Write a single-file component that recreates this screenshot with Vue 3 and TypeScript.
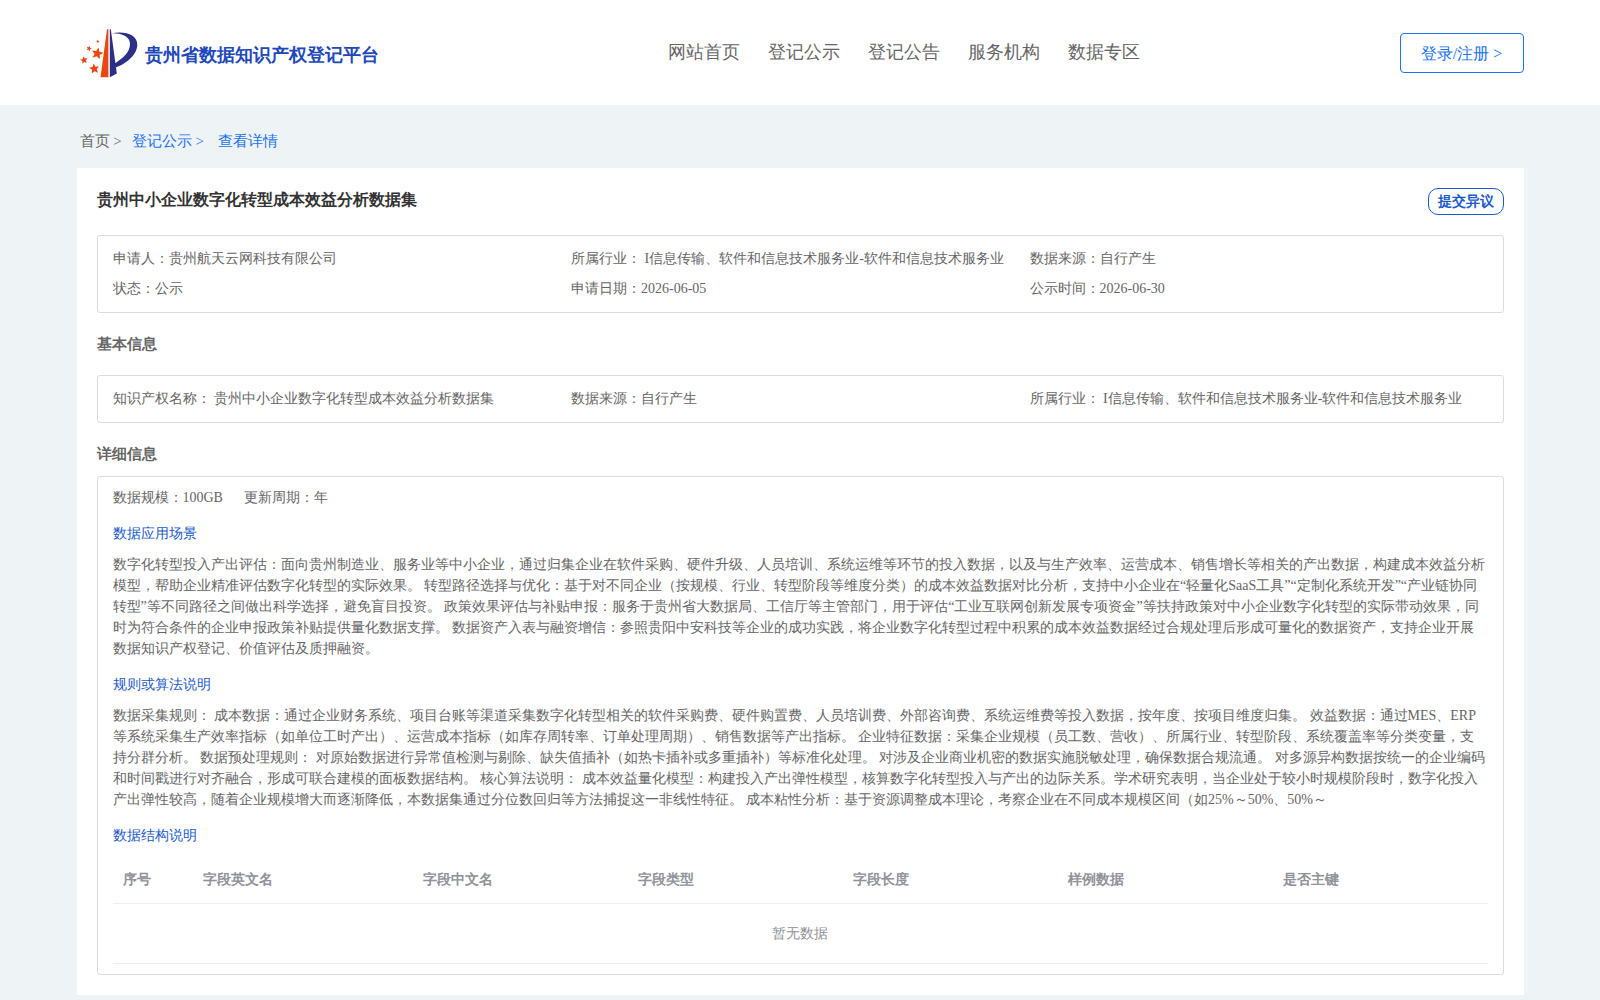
<script setup lang="ts">
interface Field {
  label: string
  value: string
}

interface Star {
  x: number
  y: number
  r: number
  tilt: number
}

const stars: Star[] = [
  { x: 17.3, y: 26.5, r: 6.2, tilt: 12 },
  { x: 14.3, y: 41.8, r: 5.4, tilt: -8 },
  { x: 4, y: 33.2, r: 4, tilt: -10 },
  { x: 9, y: 21.5, r: 2.8, tilt: 20 },
  { x: 17.7, y: 14.5, r: 1.8, tilt: 10 },
]

const navItems: string[] = ['网站首页', '登记公示', '登记公告', '服务机构', '数据专区']

const summary: Field[] = [
  { label: '申请人：', value: '贵州航天云网科技有限公司' },
  { label: '所属行业：', value: ' I信息传输、软件和信息技术服务业-软件和信息技术服务业' },
  { label: '数据来源：', value: '自行产生' },
  { label: '状态：', value: '公示' },
  { label: '申请日期：', value: '2026-06-05' },
  { label: '公示时间：', value: '2026-06-30' },
]

const basics: Field[] = [
  { label: '知识产权名称：', value: ' 贵州中小企业数字化转型成本效益分析数据集' },
  { label: '数据来源：', value: '自行产生' },
  { label: '所属行业：', value: ' I信息传输、软件和信息技术服务业-软件和信息技术服务业' },
]

const scenario =
  '数字化转型投入产出评估：面向贵州制造业、服务业等中小企业，通过归集企业在软件采购、硬件升级、人员培训、系统运维等环节的投入数据，以及与生产效率、运营成本、销售增长等相关的产出数据，构建成本效益分析模型，帮助企业精准评估数字化转型的实际效果。 转型路径选择与优化：基于对不同企业（按规模、行业、转型阶段等维度分类）的成本效益数据对比分析，支持中小企业在“轻量化SaaS工具”“定制化系统开发”“产业链协同转型”等不同路径之间做出科学选择，避免盲目投资。 政策效果评估与补贴申报：服务于贵州省大数据局、工信厅等主管部门，用于评估“工业互联网创新发展专项资金”等扶持政策对中小企业数字化转型的实际带动效果，同时为符合条件的企业申报政策补贴提供量化数据支撑。 数据资产入表与融资增信：参照贵阳中安科技等企业的成功实践，将企业数字化转型过程中积累的成本效益数据经过合规处理后形成可量化的数据资产，支持企业开展数据知识产权登记、价值评估及质押融资。'

const rules =
  '数据采集规则： 成本数据：通过企业财务系统、项目台账等渠道采集数字化转型相关的软件采购费、硬件购置费、人员培训费、外部咨询费、系统运维费等投入数据，按年度、按项目维度归集。 效益数据：通过MES、ERP等系统采集生产效率指标（如单位工时产出）、运营成本指标（如库存周转率、订单处理周期）、销售数据等产出指标。 企业特征数据：采集企业规模（员工数、营收）、所属行业、转型阶段、系统覆盖率等分类变量，支持分群分析。 数据预处理规则： 对原始数据进行异常值检测与剔除、缺失值插补（如热卡插补或多重插补）等标准化处理。 对涉及企业商业机密的数据实施脱敏处理，确保数据合规流通。 对多源异构数据按统一的企业编码和时间戳进行对齐融合，形成可联合建模的面板数据结构。 核心算法说明： 成本效益量化模型：构建投入产出弹性模型，核算数字化转型投入与产出的边际关系。学术研究表明，当企业处于较小时规模阶段时，数字化投入产出弹性较高，随着企业规模增大而逐渐降低，本数据集通过分位数回归等方法捕捉这一非线性特征。 成本粘性分析：基于资源调整成本理论，考察企业在不同成本规模区间（如25%～50%、50%～'

const columns: string[] = ['序号', '字段英文名', '字段中文名', '字段类型', '字段长度', '样例数据', '是否主键']
</script>

<template>
  <div class="page">
    <header class="header">
      <div class="brand">
        <svg class="logo" width="60" height="52" viewBox="0 0 60 52" aria-hidden="true">
          <path d="M27 2.3 L28.4 2.3 L28.4 50.2 L20.5 50.2 Z" fill="#e8470f" />
          <path d="M29.8 2.3 L30.8 2.3 L36.8 46.5 L29.8 50.2 Z" fill="#2a3088" />
          <path
            d="M31.7 6.3 C44 3.5 57.6 7 57.3 18 C57 28.5 45 37.500 35.500 40.500 L34.800 36.500 C41.500 32 50 26 50 17 C50 9 41 6 31.700 6.300 Z"
            fill="#2a3088"
          />
          <polygon
            v-for="(s, i) in stars"
            :key="i"
            points="0,-1 0.26,-0.36 0.95,-0.31 0.42,0.14 0.59,0.81 0,0.44 -0.59,0.81 -0.42,0.14 -0.95,-0.31 -0.26,-0.36"
            :transform="`translate(${s.x} ${s.y}) rotate(${s.tilt}) scale(${s.r})`"
            fill="#e8470f"
          />
        </svg>
        <span class="brand-name">贵州省数据知识产权登记平台</span>
      </div>
      <nav class="nav">
        <a v-for="item in navItems" :key="item" class="nav-item">{{ item }}</a>
      </nav>
      <button class="login" type="button">登录/注册 &gt;</button>
    </header>

    <main class="content">
      <div class="crumbs">
        <span class="crumb home">首页 &gt;</span>
        <span class="crumb parent">登记公示 &gt;</span>
        <span class="crumb">查看详情</span>
      </div>

      <section class="card">
        <div class="title-row">
          <h1 class="title">贵州中小企业数字化转型成本效益分析数据集</h1>
          <button class="objection" type="button">提交异议</button>
        </div>

        <div class="box grid">
          <div v-for="f in summary" :key="f.label" class="field">{{ f.label }}{{ f.value }}</div>
        </div>

        <h2 class="section">基本信息</h2>
        <div class="box grid">
          <div v-for="f in basics" :key="f.label" class="field">{{ f.label }}{{ f.value }}</div>
        </div>

        <h2 class="section detail">详细信息</h2>
        <div class="box details">
          <div class="meta">
            <span>数据规模：100GB</span>
            <span>更新周期：年</span>
          </div>
          <h3 class="sub">数据应用场景</h3>
          <p class="para">{{ scenario }}</p>
          <h3 class="sub">规则或算法说明</h3>
          <p class="para">{{ rules }}</p>
          <h3 class="sub">数据结构说明</h3>
          <div class="table">
            <div class="thead">
              <div v-for="c in columns" :key="c" class="th">{{ c }}</div>
            </div>
            <div class="empty">暂无数据</div>
          </div>
        </div>
      </section>
    </main>
  </div>
</template>

<style>
body {
  background: #eef3f6;
}
</style>

<style scoped>
.page {
  height: 1000px;
  overflow: hidden;
  background: #eef3f6;
  color: #666;
  font-family: "Liberation Serif", serif;
  font-size: 14px;
}

.page * {
  box-sizing: border-box;
}

.header {
  display: grid;
  grid-template-columns: 588px auto 1fr;
  height: 105px;
  padding: 0 76px 0 80px;
  background: #fff;
}

.brand {
  display: flex;
  align-items: center;
  gap: 5px;
}

.logo {
  display: block;
}

.brand-name {
  padding-top: 5px;
  color: #2147bb;
  font-size: 18px;
  font-weight: bold;
  line-height: 24px;
}

.nav {
  display: flex;
  align-items: center;
  gap: 28px;
  padding-bottom: 1px;
}

.nav-item {
  font-size: 18px;
  line-height: 24px;
}

.login {
  align-self: center;
  justify-self: end;
  width: 124px;
  height: 40px;
  padding: 3px 1px 0 0;
  border: 1px solid #1a72f2;
  border-radius: 4px;
  background: #fff;
  color: #1a72f2;
  font-family: inherit;
  font-size: 16px;
}

.content {
  width: 1447px;
  margin: 0 auto;
}

.crumbs {
  display: flex;
  align-items: center;
  height: 63px;
  padding: 10px 0 0 3px;
  color: #1a72f2;
  font-size: 15px;
}

.home {
  margin-right: 10px;
  color: #666;
}

.parent {
  margin-right: 14px;
}

.card {
  height: 827px;
  padding: 20px;
  background: #fff;
}

.title-row {
  display: flex;
  align-items: flex-start;
  justify-content: space-between;
  height: 47px;
}

.title {
  margin: 0;
  color: #333;
  font-size: 16px;
  line-height: 24px;
}

.objection {
  width: 76px;
  height: 27px;
  padding: 0;
  border: 1px solid #1a5acc;
  border-radius: 10px;
  background: #fff;
  color: #1a5acc;
  font-family: inherit;
  font-size: 14px;
  font-weight: bold;
}

.box {
  border: 1px solid #dcdcdc;
  border-radius: 3px;
}

.grid {
  display: grid;
  grid-template-columns: 458.5px 458.5px 1fr;
  padding: 8px 15px;
}

.field {
  line-height: 30px;
  white-space: nowrap;
}

.section {
  height: 62px;
  margin: 0;
  padding-top: 19px;
  font-size: 15px;
  line-height: 24px;
}

.section.detail {
  height: 53px;
}

.details {
  height: 499px;
  padding: 10px 15px;
}

.meta {
  display: flex;
  gap: 21px;
  line-height: 21px;
}

.sub {
  margin: 15px 0 10px;
  color: #1a5acc;
  font-size: 14px;
  font-weight: normal;
  line-height: 21px;
}

.para {
  margin: 0;
  line-height: 21px;
}

.table {
  color: #909399;
}

.thead {
  display: grid;
  grid-template-columns: 80px 220px repeat(5, 215px);
  height: 48px;
  border-bottom: 1px solid #ebeef5;
}

.th {
  padding-left: 10px;
  font-weight: bold;
  line-height: 47px;
}

.empty {
  height: 60px;
  border-bottom: 1px solid #ebeef5;
  line-height: 60px;
  text-align: center;
}
</style>
